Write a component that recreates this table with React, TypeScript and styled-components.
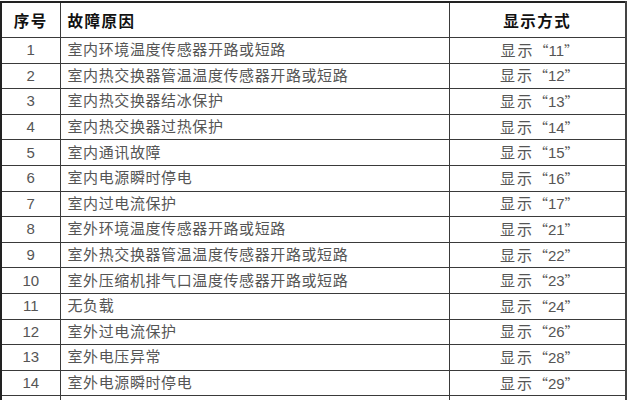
import { createGlobalStyle, styled } from "styled-components";

type Row = {
  no: string;
  reason: string;
  code: string;
};

const rows: Row[] = [
  { no: "1", reason: "室内环境温度传感器开路或短路", code: "11" },
  { no: "2", reason: "室内热交换器管温温度传感器开路或短路", code: "12" },
  { no: "3", reason: "室内热交换器结冰保护", code: "13" },
  { no: "4", reason: "室内热交换器过热保护", code: "14" },
  { no: "5", reason: "室内通讯故障", code: "15" },
  { no: "6", reason: "室内电源瞬时停电", code: "16" },
  { no: "7", reason: "室内过电流保护", code: "17" },
  { no: "8", reason: "室外环境温度传感器开路或短路", code: "21" },
  { no: "9", reason: "室外热交换器管温温度传感器开路或短路", code: "22" },
  { no: "10", reason: "室外压缩机排气口温度传感器开路或短路", code: "23" },
  { no: "11", reason: "无负载", code: "24" },
  { no: "12", reason: "室外过电流保护", code: "26" },
  { no: "13", reason: "室外电压异常", code: "28" },
  { no: "14", reason: "室外电源瞬时停电", code: "29" },
];

const GlobalStyle = createGlobalStyle`
  html, body {
    margin: 0;
    padding: 0;
    background: #ffffff;
    overflow: hidden;
  }
`;

function App() {
  return (
    <Page>
      <GlobalStyle />
      <Table>
        <colgroup>
          <col style={{ width: 59 }} />
          <col style={{ width: 389 }} />
          <col style={{ width: 177 }} />
        </colgroup>
        <thead>
          <tr>
            <HeadCell align="center">序号</HeadCell>
            <HeadCell align="left">故障原因</HeadCell>
            <HeadCell align="center">显示方式</HeadCell>
          </tr>
        </thead>
        <tbody>
          {rows.map((r) => (
            <tr key={r.no}>
              <NumCell>{r.no}</NumCell>
              <ReasonCell>{r.reason}</ReasonCell>
              <CodeCell>
                <ShowWord>显示</ShowWord>
                <Quote>“</Quote>
                {r.code}
                <Quote>”</Quote>
              </CodeCell>
            </tr>
          ))}
          <tr>
            <NumCell />
            <ReasonCell />
            <CodeCell />
          </tr>
        </tbody>
      </Table>
    </Page>
  );
}

const Page = styled.div`
  width: 627px;
  height: 400px;
  overflow: hidden;
  padding-top: 1px;
  box-sizing: border-box;
`;

const Table = styled.table`
  width: 625px;
  border-collapse: collapse;
  table-layout: fixed;
  font-family: "Liberation Sans", "Noto Sans CJK SC", sans-serif;
  border-left: 2px solid #222;
  border-right: 2px solid #444;
  border-top: 2px solid #222;
`;

const Cell = styled.td`
  border: 1px solid #3a3a3a;
  padding: 0;
  height: 24.6px;
  font-size: 15px;
  color: #555;
  line-height: 18px;
  white-space: nowrap;
  overflow: hidden;
`;

const HeadCell = styled.th<{ align: "left" | "center" }>`
  border: 1px solid #3a3a3a;
  height: 34px;
  padding: 0 0 0 ${({ align }) => (align === "left" ? "7px" : "0")};
  text-align: ${({ align }) => align};
  font-size: 15.5px;
  font-weight: bold;
  color: #111;
  letter-spacing: 1.5px;
`;

const NumCell = styled(Cell)`
  text-align: center;
`;

const ReasonCell = styled(Cell)`
  padding-left: 7px;
  letter-spacing: 0.6px;
`;

const CodeCell = styled(Cell)`
  text-align: center;
  padding-left: 4px;
`;

const ShowWord = styled.span`
  letter-spacing: 2px;
`;

const Quote = styled.span`
  font-family: "Noto Sans CJK SC", sans-serif;
  font-size: 14px;
`;

export default App;
